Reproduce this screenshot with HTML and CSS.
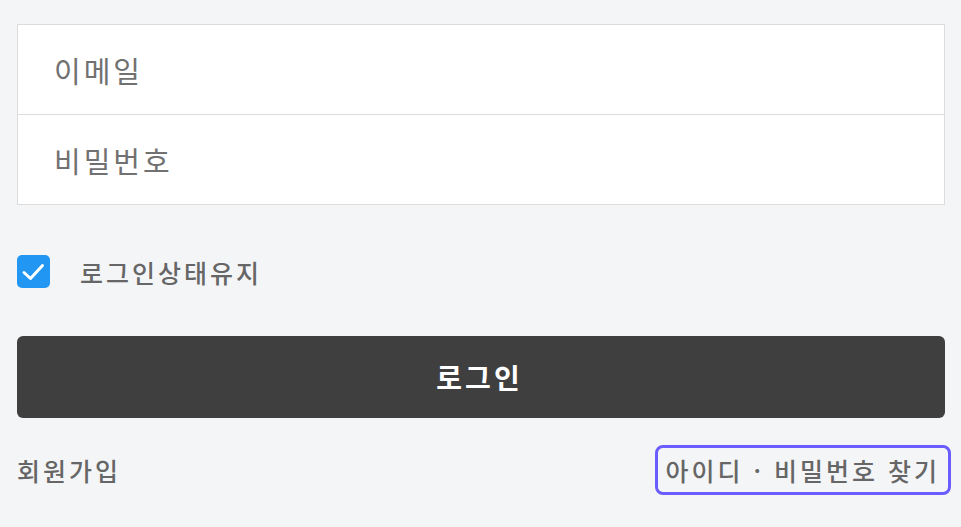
FILE: index.html
```html
<!DOCTYPE html>
<html lang="ko">
<head>
<meta charset="utf-8">
<link rel="stylesheet" href="styles.css">
</head>
<body>
<main class="login">
  <div class="fields">
    <div class="field">이메일</div>
    <div class="field">비밀번호</div>
  </div>
  <label class="keep">
    <span class="check">
      <svg width="33" height="33" viewBox="0 0 33 33"><path d="M7 17.5l6.5 6 12-13" fill="none" stroke="#fff" stroke-width="3" stroke-linecap="round" stroke-linejoin="round"/></svg>
    </span>
    <span class="keep-text">로그인상태유지</span>
  </label>
  <button class="submit">로그인</button>
  <div class="links">
    <a class="link">회원가입</a>
    <a class="link focus">아이디 · 비밀번호 찾기</a>
  </div>
</main>
</body>
</html>
```
FILE: styles.css
```css
html, body {
  margin: 0;
  padding: 0;
  background: #f4f5f7;
  height: 100%;
}
body {
  font-family: "Noto Sans CJK KR", "Noto Sans", sans-serif;
}
.login {
  padding: 24px 16px 0 17px;
  display: flex;
  flex-direction: column;
}
.fields {
  background: #fff;
  border: 1px solid #dcdcdc;
}
.field {
  height: 89px;
  display: flex;
  align-items: center;
  padding-left: 36px;
  font-size: 29px;
  letter-spacing: 3px;
  color: #717171;
}
.field + .field {
  border-top: 1px solid #dcdcdc;
}
.keep {
  margin-top: 50px;
  display: flex;
  align-items: center;
  height: 33px;
}
.check {
  width: 33px;
  height: 33px;
  border-radius: 5px;
  background: #2196f3;
  display: flex;
}
.keep-text {
  margin-left: 30px;
  font-size: 25px;
  font-weight: 500;
  letter-spacing: 3px;
  color: #666;
}
.submit {
  margin-top: 48px;
  height: 82px;
  border: none;
  border-radius: 6px;
  background: #3f3f3f;
  color: #fff;
  font-family: inherit;
  font-size: 28px;
  font-weight: 700;
  letter-spacing: 3px;
  padding-left: 3px;
}
.links {
  margin-top: 27px;
  display: flex;
  justify-content: space-between;
  align-items: center;
}
.link {
  font-size: 25px;
  font-weight: 500;
  letter-spacing: 3px;
  color: #666;
}
.focus {
  padding: 4px 8px 4px 8px;
  letter-spacing: 3px;
  margin-right: -6px;
  border: 3px solid #6a5cff;
  border-radius: 8px;
}
```
